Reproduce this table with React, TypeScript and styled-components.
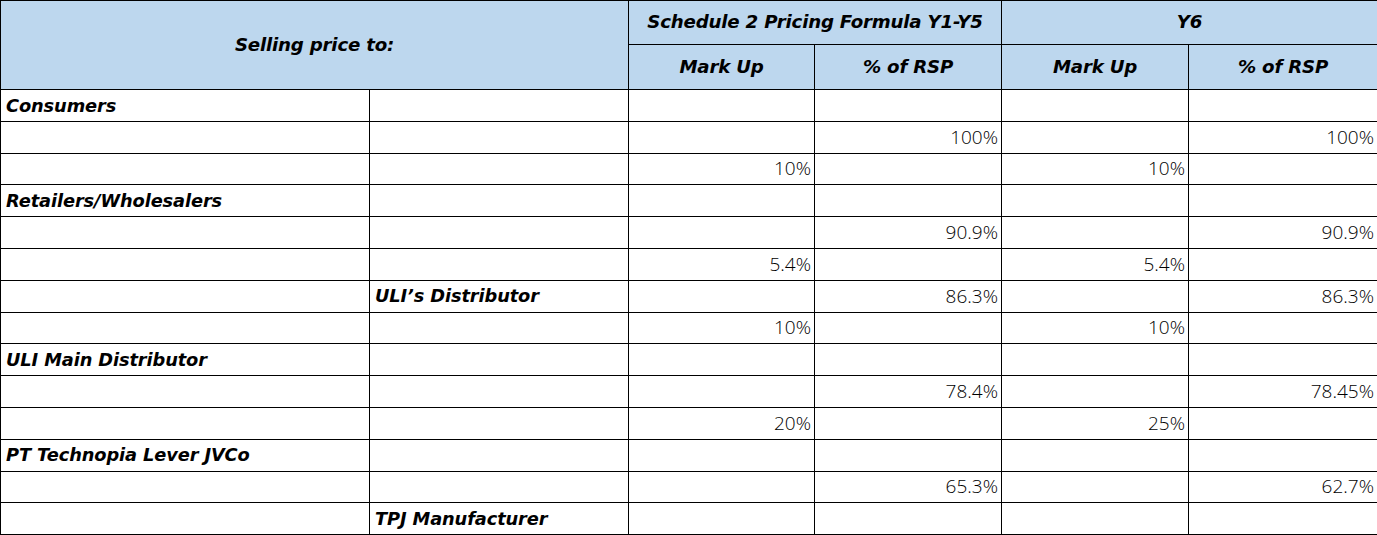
import React from "react";
import styled, { createGlobalStyle } from "styled-components";

const Global = createGlobalStyle`
  html, body { margin: 0; padding: 0; background: #ffffff; }
  body { font-family: "DejaVu Sans", "Liberation Sans", sans-serif; }
`;

const Table = styled.table`
  border-collapse: collapse;
  table-layout: fixed;
  width: 1377px;
  color: #000;
`;

const Col = styled.col<{ $w: number }>`
  width: ${(p) => p.$w}px;
`;

const HeadCell = styled.th<{ $h?: number }>`
  background: #bdd7ee;
  border: 1px solid #000;
  font-family: "DejaVu Sans", "Liberation Sans", sans-serif;
  font-weight: 700;
  font-style: italic;
  font-size: 18.2px;
  text-align: center;
  vertical-align: middle;
  height: ${(p) => p.$h ?? 44}px;
  padding: 0;
  box-sizing: border-box;
  letter-spacing: -0.2px;
  line-height: 1;
`;

const Cell = styled.td<{ $num?: boolean }>`
  border: 1px solid #000;
  height: 31.8px;
  padding: 0 4px 0 5px;
  box-sizing: border-box;
  vertical-align: middle;
  white-space: nowrap;
  line-height: 1;
  ${(p) =>
    p.$num
      ? `text-align: right; font-family: "Open Sans", "Liberation Sans", sans-serif; font-size: 19px; font-weight: 350; color: #000; padding-right: 3px;`
      : `text-align: left; font-family: "DejaVu Sans", "Liberation Sans", sans-serif; font-size: 17.8px; font-weight: 700; font-style: italic; letter-spacing: -0.1px;`}
`;

type Row = [string, string, string, string, string, string];

const widths = [369, 259, 186, 187, 187, 189];

const rows: Row[] = [
  ["Consumers", "", "", "", "", ""],
  ["", "", "", "100%", "", "100%"],
  ["", "", "10%", "", "10%", ""],
  ["Retailers/Wholesalers", "", "", "", "", ""],
  ["", "", "", "90.9%", "", "90.9%"],
  ["", "", "5.4%", "", "5.4%", ""],
  ["", "ULI\u2019s Distributor", "", "86.3%", "", "86.3%"],
  ["", "", "10%", "", "10%", ""],
  ["ULI Main Distributor", "", "", "", "", ""],
  ["", "", "", "78.4%", "", "78.45%"],
  ["", "", "20%", "", "25%", ""],
  ["PT Technopia Lever JVCo", "", "", "", "", ""],
  ["", "", "", "65.3%", "", "62.7%"],
  ["", "TPJ Manufacturer", "", "", "", ""],
];

export default function App() {
  return (
    <>
      <Global />
      <Table>
        <colgroup>
          {widths.map((w, i) => (
            <Col key={i} $w={w} />
          ))}
        </colgroup>
        <thead>
          <tr>
            <HeadCell colSpan={2} rowSpan={2}>
              Selling price to:
            </HeadCell>
            <HeadCell colSpan={2} $h={44}>
              Schedule 2 Pricing Formula Y1-Y5
            </HeadCell>
            <HeadCell colSpan={2} $h={44}>
              Y6
            </HeadCell>
          </tr>
          <tr>
            <HeadCell $h={45}>Mark Up</HeadCell>
            <HeadCell $h={45}>% of RSP</HeadCell>
            <HeadCell $h={45}>Mark Up</HeadCell>
            <HeadCell $h={45}>% of RSP</HeadCell>
          </tr>
        </thead>
        <tbody>
          {rows.map((r, i) => (
            <tr key={i}>
              {r.map((v, j) => (
                <Cell key={j} $num={j >= 2}>
                  {v}
                </Cell>
              ))}
            </tr>
          ))}
        </tbody>
      </Table>
    </>
  );
}
